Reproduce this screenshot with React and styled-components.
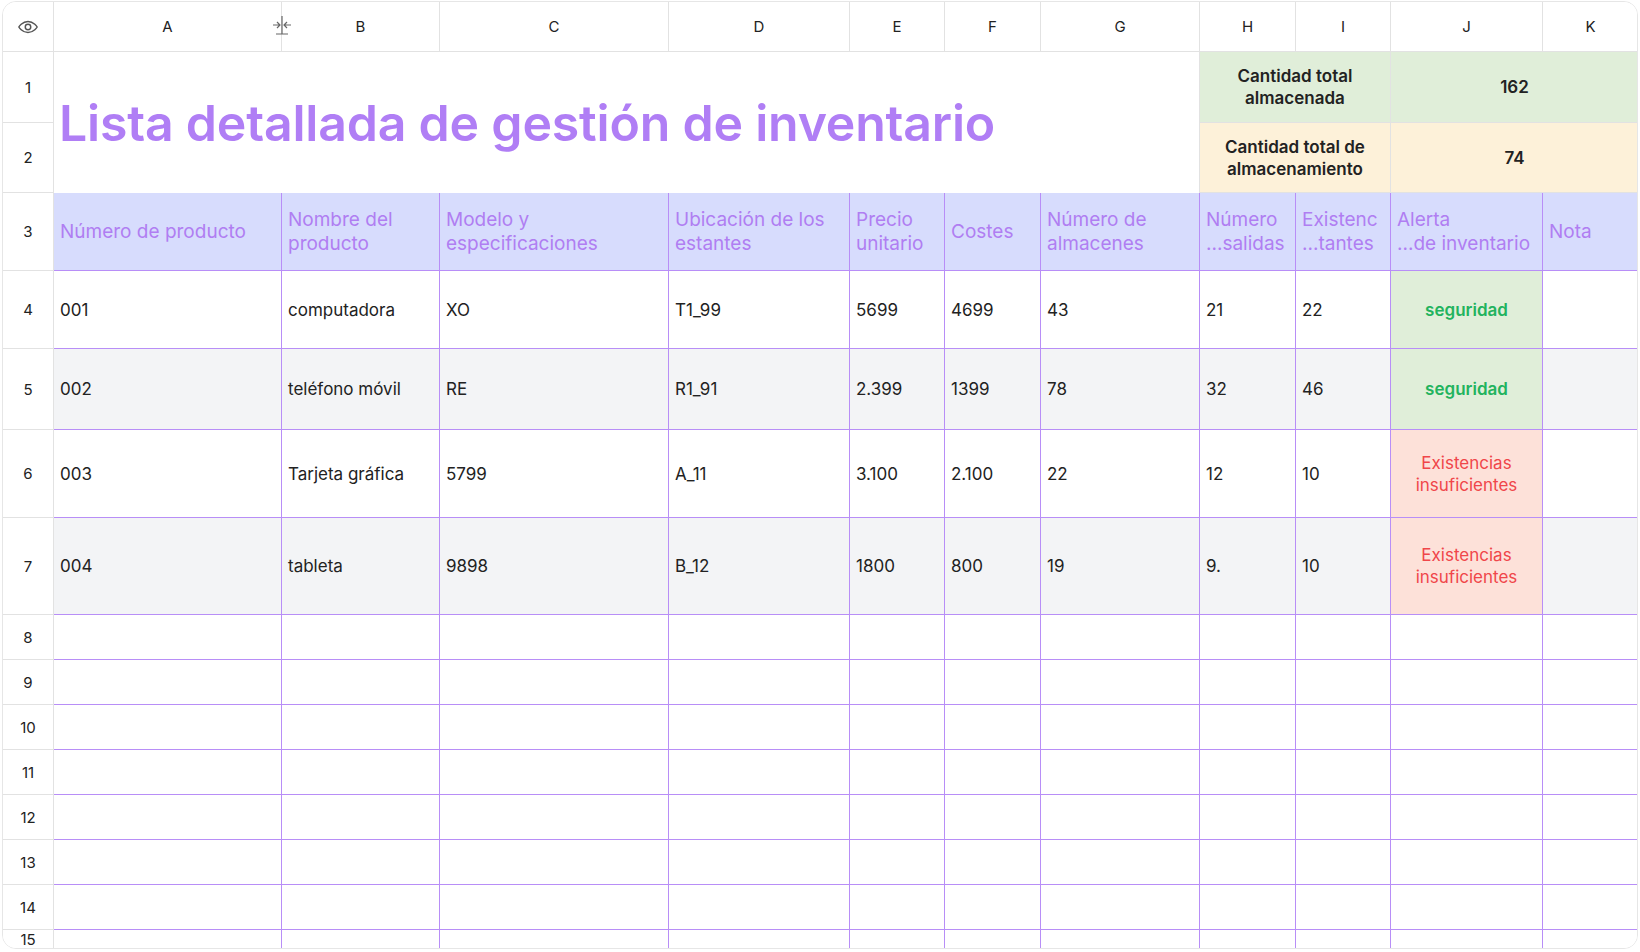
import React from 'react';
import styled, { createGlobalStyle, css } from 'styled-components';

const Global = createGlobalStyle`
  html, body { margin: 0; background: #fff; }
  body { font-family: Inter, "Noto Sans", sans-serif; }
`;

const COLS = [51, 228, 158, 229, 181, 95, 96, 159, 96, 95, 152, 96];
const ROWS = [50, 71, 70, 78, 78, 81, 88, 97, 45, 45, 45, 45, 45, 45, 45];
const LETTERS = ['A', 'B', 'C', 'D', 'E', 'F', 'G', 'H', 'I', 'J', 'K'];
const PURPLE = '#b88ef7';

const Sheet = styled.div`
  width: 1636px;
  height: 948px;
  margin: 1px 2px;
  border: 1px solid #e6e6e6;
  border-radius: 14px;
  overflow: hidden;
  display: grid;
  grid-template-columns: ${COLS.map(c => c + 'px').join(' ')};
  grid-template-rows: ${ROWS.map(r => r + 'px').join(' ')};
  box-sizing: border-box;
`;

const Head = styled.div`
  display: flex;
  align-items: center;
  justify-content: center;
  font-size: 15px;
  color: #222;
  border-right: 1.5px solid #e2e2e2;
  border-bottom: 1.5px solid #e2e2e2;
  background: #fff;
`;

const Cell = styled.div`
  display: flex;
  align-items: center;
  padding: 0 6px;
  font-size: 17px;
  color: #222;
  border-right: 1.5px solid ${PURPLE};
  border-bottom: 1.5px solid ${PURPLE};
  background: ${p => p.$bg || '#fff'};
  ${p => p.$center && css`justify-content: center; text-align: center;`}
`;

const HeaderCell = styled(Cell)`
  background: #d7dcfd;
  color: #b07ef2;
  font-size: 19px;
  line-height: 24px;
  white-space: pre-line;
`;

const Title = styled.div`
  grid-column: 2 / 9;
  grid-row: 2 / 4;
  display: flex;
  align-items: center;
  padding: 0 5px;
  font-size: 50px;
  font-weight: 600;
  color: #b07ef5;
  letter-spacing: -0.2px;
  border-right: 1.5px solid #e2e2e2;
`;

const Summary = styled.div`
  display: flex;
  align-items: center;
  justify-content: center;
  text-align: center;
  font-size: 17px;
  font-weight: 600;
  line-height: 22px;
  color: #222;
  background: ${p => p.$bg};
  border-right: 1.5px solid #e2e2e2;
  border-bottom: 1.5px solid #e2e2e2;
`;

const Alert = styled(Cell)`
  justify-content: center;
  text-align: center;
  font-weight: ${p => (p.$ok ? 600 : 400)};
  color: ${p => (p.$ok ? '#22b35e' : '#f0464a')};
  background: ${p => (p.$ok ? '#e0eed9' : '#fde1d9')};
  line-height: 22px;
`;

const Eye = () => (
  <svg width="22" height="22" viewBox="0 0 24 24" fill="none" stroke="#555" strokeWidth="1.6">
    <path d="M2 12s3.5-6 10-6 10 6 10 6-3.5 6-10 6S2 12 2 12z" />
    <circle cx="12" cy="12" r="3" />
  </svg>
);

const ResizeHandle = styled.span`
  position: absolute;
  right: -12px;
  top: 50%;
  transform: translateY(-50%);
`;

const headers = ['Número de producto', 'Nombre del\nproducto', 'Modelo y\nespecificaciones', 'Ubicación de los\nestantes', 'Precio\nunitario', 'Costes', 'Número de\nalmacenes', 'Número\n...salidas', 'Existenc\n...tantes', 'Alerta\n...de inventario', 'Nota'];

const data = [
  ['001', 'computadora', 'XO', 'T1_99', '5699', '4699', '43', '21', '22', 'seguridad', true],
  ['002', 'teléfono móvil', 'RE', 'R1_91', '2.399', '1399', '78', '32', '46', 'seguridad', true],
  ['003', 'Tarjeta gráfica', '5799', 'A_11', '3.100', '2.100', '22', '12', '10', 'Existencias\ninsuficientes', false],
  ['004', 'tableta', '9898', 'B_12', '1800', '800', '19', '9.', '10', 'Existencias\ninsuficientes', false],
];

export default function App() {
  return (
    <>
      <Global />
      <Sheet>
        <Head><Eye /></Head>
        {LETTERS.map(l => (
          <Head key={l} style={l === 'A' ? { position: 'relative' } : undefined}>
            {l}
            {l === 'A' && (
              <ResizeHandle>
                <svg width="22" height="20" viewBox="0 0 22 20" fill="none" stroke="#666" strokeWidth="1.2">
                  <path d="M11 1v18M2 10h7M6 7l3 3-3 3M20 10h-7M16 7l-3 3 3 3M5 19h12" />
                </svg>
              </ResizeHandle>
            )}
          </Head>
        ))}

        <Head>1</Head>
        <Title>Lista detallada de gestión de inventario</Title>
        <Summary $bg="#e0eed9" style={{ gridColumn: '9 / 11' }}>Cantidad total<br />almacenada</Summary>
        <Summary $bg="#e0eed9" style={{ gridColumn: '11 / 13' }}>162</Summary>
        <Head>2</Head>
        <Summary $bg="#fdf1d9" style={{ gridColumn: '9 / 11' }}>Cantidad total de<br />almacenamiento</Summary>
        <Summary $bg="#fdf1d9" style={{ gridColumn: '11 / 13' }}>74</Summary>

        <Head>3</Head>
        {headers.map(h => <HeaderCell key={h}>{h}</HeaderCell>)}

        {data.map((r, i) => {
          const bg = i % 2 ? '#f3f4f6' : '#fff';
          return (
            <React.Fragment key={i}>
              <Head>{i + 4}</Head>
              {r.slice(0, 9).map((v, j) => <Cell key={j} $bg={bg}>{v}</Cell>)}
              <Alert $ok={r[10]} style={{ whiteSpace: 'pre-line' }}>{r[9]}</Alert>
              <Cell $bg={bg} />
            </React.Fragment>
          );
        })}

        {[8, 9, 10, 11, 12, 13, 14, 15].map(n => (
          <React.Fragment key={n}>
            <Head>{n}</Head>
            {LETTERS.map(l => <Cell key={l} />)}
          </React.Fragment>
        ))}
      </Sheet>
    </>
  );
}
